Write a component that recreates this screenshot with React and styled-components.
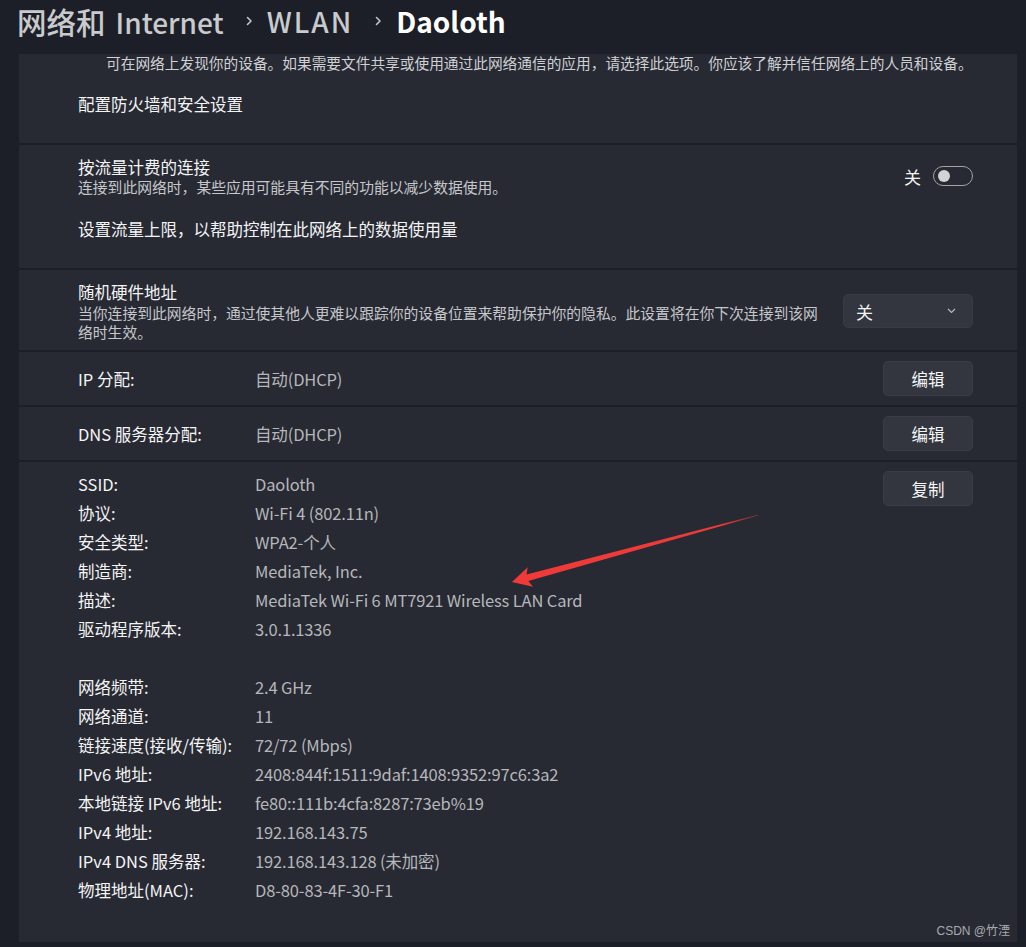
import React from "react";
import styled, { createGlobalStyle } from "styled-components";

const GlobalStyle = createGlobalStyle`
  body {
    margin: 0;
    background: #1c1f27;
    font-family: "Noto Sans CJK SC", "Noto Sans", sans-serif;
  }
`;

const Page = styled.div`
  position: relative;
  width: 1026px;
  height: 947px;
  overflow: hidden;
  background: #1c1f27;
`;

const Header = styled.div`
  height: 54px;
  padding-left: 17px;
  box-sizing: border-box;
  display: flex;
  align-items: flex-start;
  white-space: nowrap;
`;

const Crumb = styled.span`
  font-size: 28px;
  line-height: 42px;
  font-weight: ${(p) => (p.$current ? 700 : 500)};
  color: ${(p) => (p.$current ? "#ffffff" : "#c9cacd")};
  letter-spacing: ${(p) => p.$ls || 0}px;
`;

const CrumbCjk = styled.span`
  font-size: 29.5px;
  margin-right: 10px;
`;

const CrumbSep = styled.svg`
  width: 8px;
  height: 10px;
  margin: 16px 14px 0 21px;
  flex: none;
`;

const Cards = styled.div`
  margin-left: 19px;
  width: 998px;
  display: flex;
  flex-direction: column;
  gap: 2px;
`;

const Card = styled.div`
  background: #272a33;
  box-sizing: border-box;
  padding: ${(p) => p.$pad || "0 44px 0 59px"};
  height: ${(p) => p.$h}px;
`;

const RowCard = styled(Card)`
  display: flex;
  align-items: ${(p) => (p.$top ? "flex-start" : "center")};
`;

const Note = styled.div`
  margin-left: 28px;
  font-size: 14.7px;
  line-height: 18px;
  color: #cfd0d3;
  white-space: nowrap;
`;

const Title = styled.div`
  font-size: 16.5px;
  line-height: 22px;
  color: #f4f4f5;
  margin-top: ${(p) => p.$mt || 0}px;
`;

const Desc = styled.div`
  font-size: 14.8px;
  line-height: ${(p) => p.$lh || 18}px;
  color: #c6c7ca;
  max-width: 746px;
`;

const Grow = styled.div`
  flex: 1;
  min-width: 0;
`;

const SettingRow = styled.div`
  display: flex;
  align-items: center;
`;

const ToggleWrap = styled.div`
  display: flex;
  align-items: center;
  gap: 12px;
  font-size: 17px;
  color: #f4f4f5;
`;

const Toggle = styled.div`
  width: 40px;
  height: 20px;
  box-sizing: border-box;
  border: 1.5px solid #a2a3a7;
  border-radius: 10px;
  position: relative;
  &::after {
    content: "";
    position: absolute;
    left: 3.5px;
    top: 2.5px;
    width: 12px;
    height: 12px;
    border-radius: 50%;
    background: #d2d3d6;
  }
`;

const Select = styled.div`
  width: 130px;
  height: 34px;
  box-sizing: border-box;
  background: #33363e;
  border: 1px solid #383b43;
  border-radius: 5px;
  display: flex;
  align-items: center;
  justify-content: space-between;
  padding: 0 16px 0 12px;
  font-size: 17px;
  color: #f4f4f5;
  flex: none;
`;

const Button = styled.div`
  width: 90px;
  height: 35px;
  box-sizing: border-box;
  background: #33363e;
  border: 1px solid #3a3d45;
  border-radius: 5px;
  display: flex;
  align-items: center;
  justify-content: center;
  font-size: 16.5px;
  color: #f6f6f7;
  flex: none;
  margin-top: ${(p) => (p.$top ? 9 : 0)}px;
`;

const Label = styled.div`
  width: 177px;
  flex: none;
  font-size: 16.5px;
  color: #f4f4f5;
`;

const Value = styled.div`
  font-size: 16.5px;
  letter-spacing: -0.15px;
  color: #b6b7ba;
`;

const PropList = styled.div`
  flex: 1;
  padding-top: 7.5px;
`;

const PropRow = styled.div`
  display: flex;
  align-items: center;
  height: 29px;
`;

const Arrow = styled.svg`
  position: absolute;
  left: 0;
  top: 0;
  pointer-events: none;
`;

const Watermark = styled.div`
  position: absolute;
  right: 16px;
  bottom: 9px;
  font-family: "Liberation Sans", "Noto Sans CJK SC", sans-serif;
  font-size: 12px;
  color: #a9aaad;
`;

const props1 = [
  ["SSID:", "Daoloth"],
  ["协议:", "Wi-Fi 4 (802.11n)"],
  ["安全类型:", "WPA2-个人"],
  ["制造商:", "MediaTek, Inc."],
  ["描述:", "MediaTek Wi-Fi 6 MT7921 Wireless LAN Card"],
  ["驱动程序版本:", "3.0.1.1336"],
  ["", ""],
  ["网络频带:", "2.4 GHz"],
  ["网络通道:", "11"],
  ["链接速度(接收/传输):", "72/72 (Mbps)"],
  ["IPv6 地址:", "2408:844f:1511:9daf:1408:9352:97c6:3a2"],
  ["本地链接 IPv6 地址:", "fe80::111b:4cfa:8287:73eb%19"],
  ["IPv4 地址:", "192.168.143.75"],
  ["IPv4 DNS 服务器:", "192.168.143.128 (未加密)"],
  ["物理地址(MAC):", "D8-80-83-4F-30-F1"],
];

function Chevron() {
  return (
    <CrumbSep viewBox="0 0 8 10">
      <path d="M2.5 1.5 L6 5 L2.5 8.5" fill="none" stroke="#c2c3c6" strokeWidth="1.6" strokeLinecap="round" strokeLinejoin="round" />
    </CrumbSep>
  );
}

export default function App() {
  return (
    <Page>
      <GlobalStyle />
      <Header>
        <Crumb>
          <CrumbCjk>网络和</CrumbCjk>Internet
        </Crumb>
        <Chevron />
        <Crumb $ls={2}>WLAN</Crumb>
        <Chevron />
        <Crumb $current>Daoloth</Crumb>
      </Header>
      <Cards>
        <Card $h={89} $pad="0 44px 0 59px">
          <Note>
            可在网络上发现你的设备。如果需要文件共享或使用通过此网络通信的应用，请选择此选项。你应该了解并信任网络上的人员和设备。
          </Note>
          <Title $mt={21}>配置防火墙和安全设置</Title>
        </Card>
        <Card $h={123} $pad="11px 44px 0 59px">
          <SettingRow>
            <Grow>
              <Title>按流量计费的连接</Title>
              <Desc>连接到此网络时，某些应用可能具有不同的功能以减少数据使用。</Desc>
            </Grow>
            <ToggleWrap>
              关
              <Toggle />
            </ToggleWrap>
          </SettingRow>
          <Title $mt={22}>设置流量上限，以帮助控制在此网络上的数据使用量</Title>
        </Card>
        <RowCard $h={80} $pad="11px 44px 9px 59px">
          <Grow>
            <Title>随机硬件地址</Title>
            <Desc $lh={19}>
              当你连接到此网络时，通过使其他人更难以跟踪你的设备位置来帮助保护你的隐私。此设置将在你下次连接到该网络时生效。
            </Desc>
          </Grow>
          <Select>
            关
            <svg width="9" height="6" viewBox="0 0 9 6">
              <path d="M1 1 L4.5 4.5 L8 1" fill="none" stroke="#b9babd" strokeWidth="1.2" />
            </svg>
          </Select>
        </RowCard>
        <RowCard $h={53}>
          <Label>IP 分配:</Label>
          <Grow>
            <Value>自动(DHCP)</Value>
          </Grow>
          <Button>编辑</Button>
        </RowCard>
        <RowCard $h={53}>
          <Label>DNS 服务器分配:</Label>
          <Grow>
            <Value>自动(DHCP)</Value>
          </Grow>
          <Button>编辑</Button>
        </RowCard>
        <RowCard $h={480} $top>
          <PropList>
            {props1.map(([k, v], i) => (
              <PropRow key={i}>
                <Label>{k}</Label>
                <Value>{v}</Value>
              </PropRow>
            ))}
          </PropList>
          <Button $top>复制</Button>
        </RowCard>
      </Cards>
      <Arrow width="1026" height="947" viewBox="0 0 1026 947">
        <defs>
          <linearGradient id="tailfade" x1="0" y1="0" x2="1" y2="0">
            <stop offset="0" stopColor="#f03a3a" />
            <stop offset="0.85" stopColor="#f03a3a" />
            <stop offset="1" stopColor="#f03a3a" stopOpacity="0.4" />
          </linearGradient>
        </defs>
        <g transform="translate(512 582) rotate(-15.2)">
          <polygon
            points="0,0 19,-10 16,-3.4 255,-0.5 255,0.5 16,3.4 19,10"
            fill="url(#tailfade)"
          />
        </g>
      </Arrow>
      <Watermark>CSDN @竹湮</Watermark>
    </Page>
  );
}
